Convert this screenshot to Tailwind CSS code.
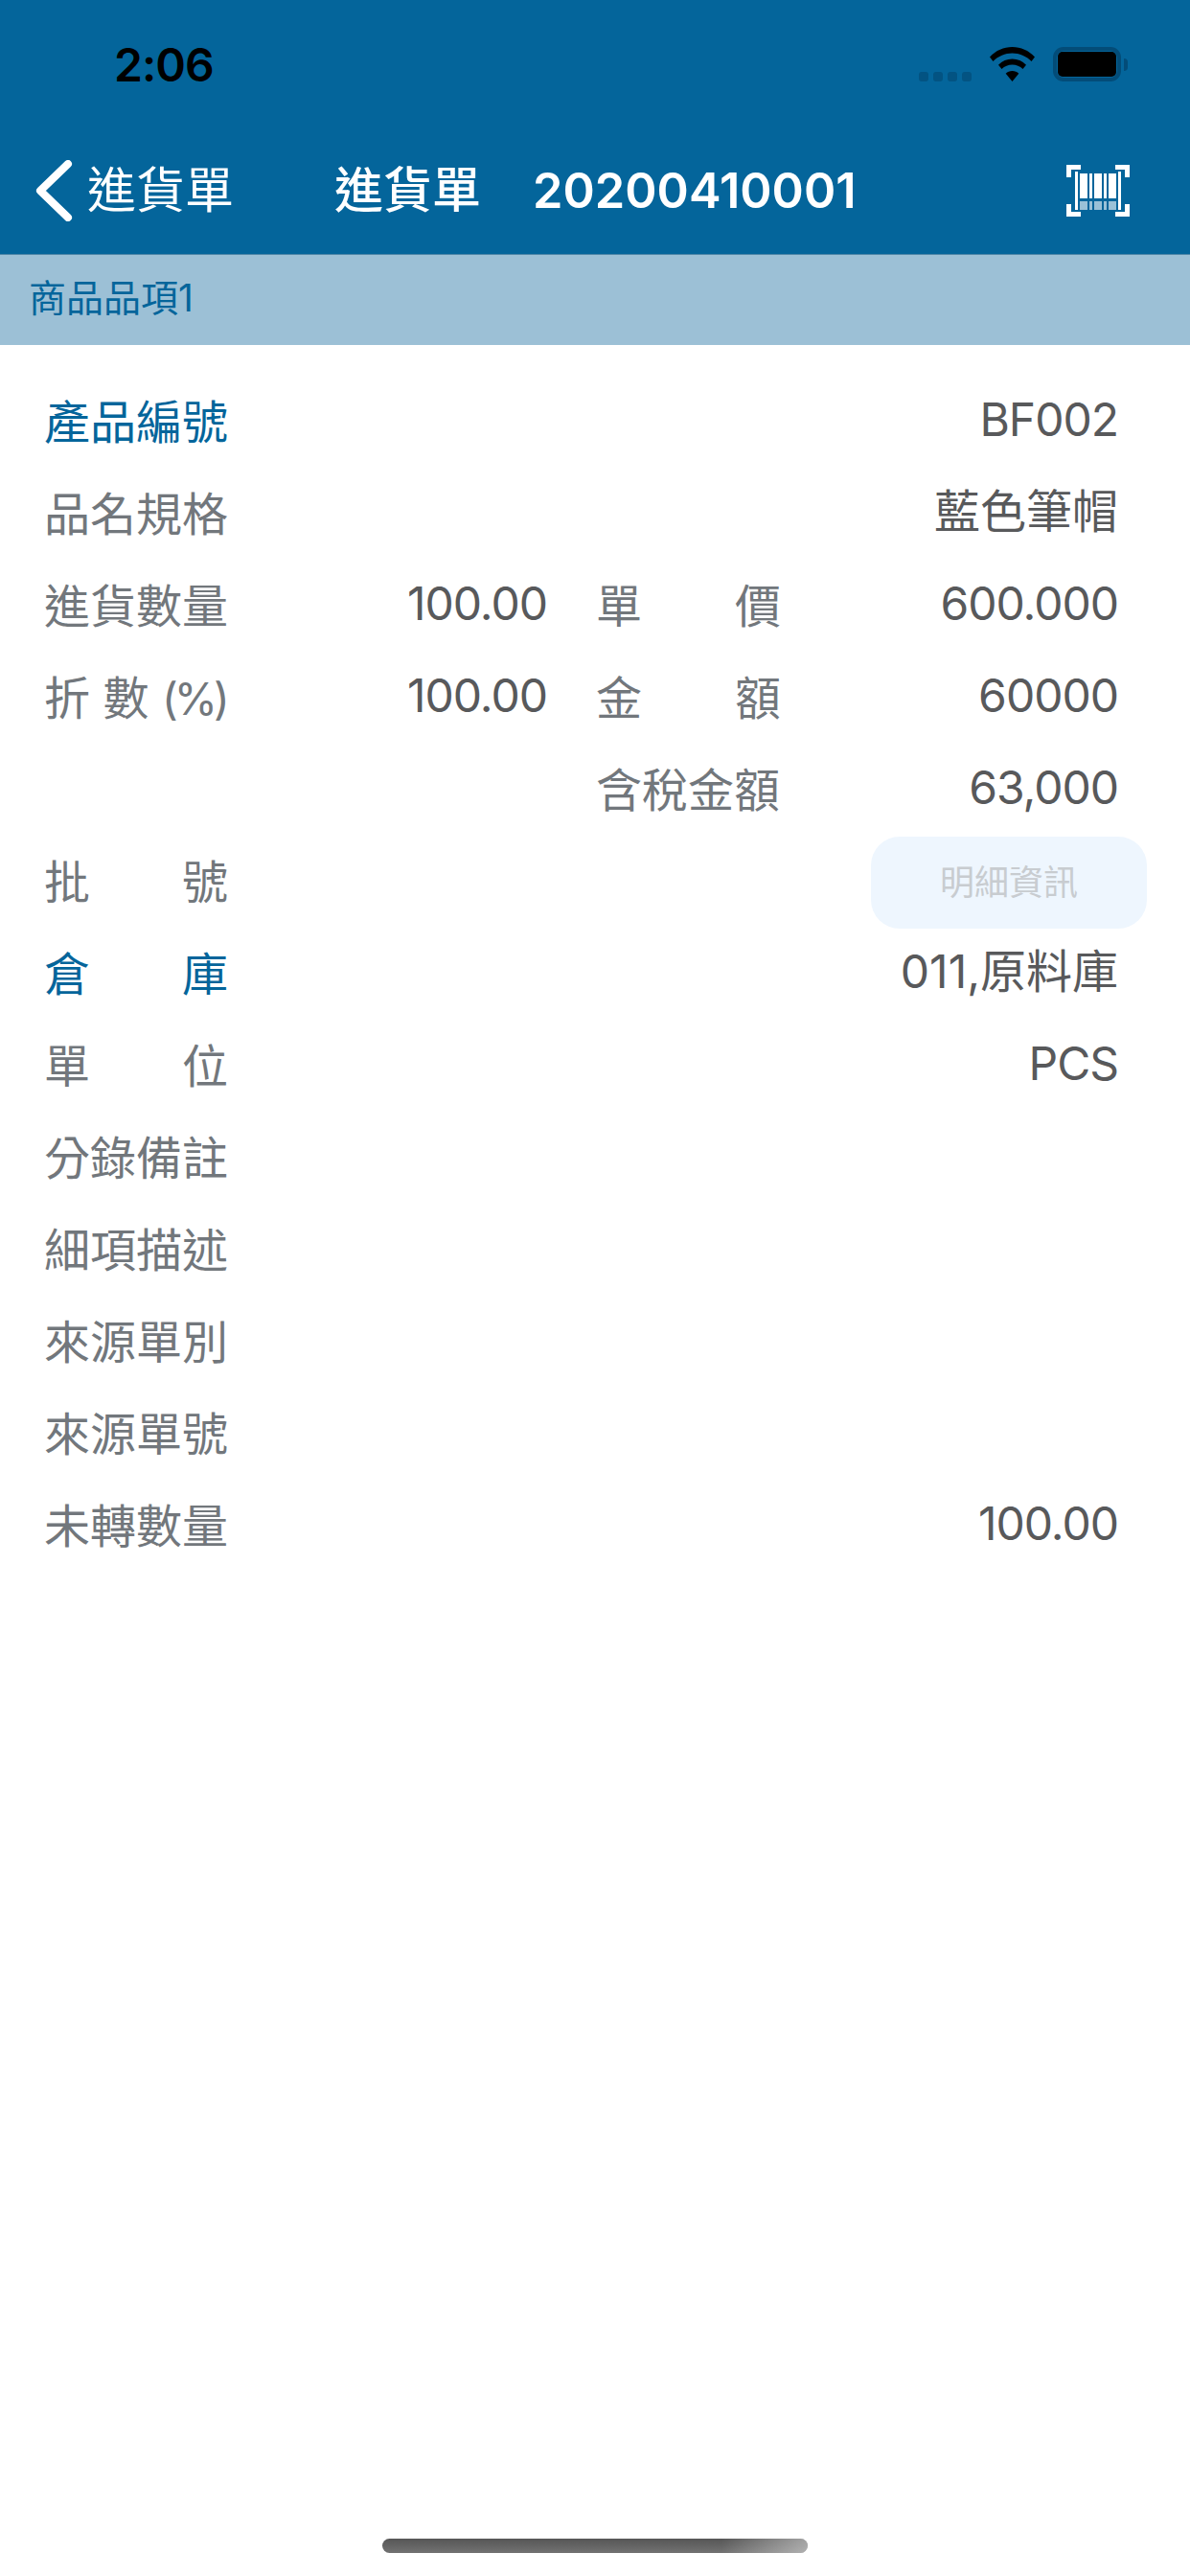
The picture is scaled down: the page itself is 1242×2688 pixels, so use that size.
<!DOCTYPE html>
<html lang="en">
<head>
  <meta charset="UTF-8" />
  <title>進貨單</title>
  <script src="https://cdn.jsdelivr.net/npm/@tailwindcss/browser@4"></script>
</head>
<body class="bg-white font-['Inter','Noto_Sans_CJK_TC',sans-serif]">
  <div class="relative w-[1242px] h-[2688px] overflow-hidden bg-white">

    <!-- Status bar + nav -->
    <div class="bg-[#04659b] h-[266px] flex flex-col border-b border-[#4f86a8]">
      <div class="h-[132px] flex items-start justify-between pl-[119px] pr-[65px] pt-[44px]">
        <span class="text-[48px] leading-[48px] font-semibold text-black tracking-[-1px]">2:06</span>
        <div class="flex items-start pt-[5px]">
          <div class="flex gap-[5px] mt-[26px] mr-[19px]">
            <span class="w-[10px] h-[10px] rounded-[3px] bg-[#035382]"></span>
            <span class="w-[10px] h-[10px] rounded-[3px] bg-[#035382]"></span>
            <span class="w-[10px] h-[10px] rounded-[3px] bg-[#035382]"></span>
            <span class="w-[10px] h-[10px] rounded-[3px] bg-[#035382]"></span>
          </div>
          <svg class="w-[47px] h-[36px] mr-[19px]" viewBox="0 0 47 36">
            <path d="M23.5 0C14.5 0 6.5 3.5 0 10.5l3.5 4.5C9 9.500 16 6.500 23.500 6.500S38 9.500 43.500 15l3.500-4.500C40.500 3.500 32.500 0 23.500 0z" fill="#000"/>
            <path d="M23.500 12.500c-5.500 0-10.500 2.200-14.500 6.200l3.500 4.300c3-3 6.800-4.500 11-4.500s8 1.500 11 4.500l3.500-4.300c-4-4-9-6.200-14.500-6.200z" fill="#000"/>
            <path d="M23.500 25c-2.700 0-5 1-6.800 2.800l6.800 8.200 6.800-8.200C28.500 26 26.200 25 23.500 25z" fill="#000"/>
          </svg>
          <div class="w-[71px] h-[36px] rounded-[11px] border-[4px] border-[#034c78] p-[1px]">
            <div class="w-full h-full rounded-[5px] bg-black"></div>
          </div>
          <span class="w-[4px] h-[13px] mt-[12px] ml-[3px] rounded-r-[4px] bg-[#034c78]"></span>
        </div>
      </div>
      <div class="h-[133px] flex items-center pl-[36px] text-white">
        <svg class="w-[40px] h-[64px]" viewBox="0 0 40 64" fill="none">
          <path d="M35 4L6 32l29 28" stroke="#fff" stroke-width="8" stroke-linecap="round" stroke-linejoin="round"/>
        </svg>
        <span class="ml-[15px] text-[51px] leading-[56px]">進貨單</span>
        <span class="ml-[105px] text-[51px] leading-[56px] font-medium">進貨單</span>
        <span class="ml-[54px] text-[50.5px] leading-[56px] font-semibold">20200410001</span>
        <svg class="ml-auto mr-[63px] w-[66px] h-[54px] blur-[0.6px]" viewBox="0 0 66 54" fill="#fff">
          <path d="M0 0h15v5H5v8H0zM66 0H51v5h10v8h5zM0 54h15v-5H5v-8H0zM66 54H51v-5h10v-8h5z"/>
          <path d="M9 7h3v40H9zM14 9h8v26h-8zM24 9h3v26h-3zM29 9h8v26h-8zM39 9h3v26h-3zM44 9h8v26h-8zM54 7h3v40h-3z"/>
          <path d="M14 38h8v9h-8zM24 38h3v9h-3zM29 38h8v9h-8zM39 38h3v9h-3zM44 38h8v9h-8z" fill-opacity=".6"/>
        </svg>
      </div>
    </div>

    <!-- Section band -->
    <div class="bg-[#9cc0d6] h-[94px] flex items-center pl-[30px] pb-[4px] text-[39px] text-[#04659b]">商品品項1</div>

    <!-- Detail rows -->
    <div class="pt-[33px] pl-[46px] pr-[75px] text-[48px] leading-[96px] text-[#72777c] whitespace-nowrap">
      <div class="h-[96px] flex justify-between">
        <span class="text-[#04659b]">產品編號</span>
        <span class="leading-[90px] text-[#58595b] tracking-[-1px]">BF002</span>
      </div>
      <div class="h-[96px] flex justify-between">
        <span>品名規格</span>
        <span class="leading-[90px] text-[#58595b]">藍色筆帽</span>
      </div>
      <div class="h-[96px] grid grid-cols-[192px_333px_244px_1fr]">
        <span>進貨數量</span>
        <span class="leading-[90px] text-right text-[#58595b] tracking-[-1px]">100.00</span>
        <span class="flex justify-between ml-[51px]"><span>單</span><span>價</span></span>
        <span class="leading-[90px] text-right text-[#58595b] tracking-[-1px]">600.000</span>
      </div>
      <div class="h-[96px] grid grid-cols-[192px_333px_244px_1fr]">
        <span>折 數 <span class="text-[46px] tracking-[-4px]">(%)</span></span>
        <span class="leading-[90px] text-right text-[#58595b] tracking-[-1px]">100.00</span>
        <span class="flex justify-between ml-[51px]"><span>金</span><span>額</span></span>
        <span class="leading-[90px] text-right text-[#58595b] tracking-[-1px]">60000</span>
      </div>
      <div class="h-[96px] grid grid-cols-[192px_333px_244px_1fr]">
        <span></span>
        <span></span>
        <span class="ml-[51px]">含稅金額</span>
        <span class="leading-[90px] text-right text-[#58595b] tracking-[-1px]">63,000</span>
      </div>
      <div class="h-[96px] flex justify-between items-center">
        <span class="flex justify-between w-[192px]"><span>批</span><span>號</span></span>
        <button class="w-[288px] h-[96px] -mr-[30px] rounded-[30px] bg-[#eef6fe] text-[36px] leading-[96px] text-[#c8ccd0]">明細資訊</button>
      </div>
      <div class="h-[96px] flex justify-between">
        <span class="flex justify-between w-[192px] text-[#04659b]"><span>倉</span><span>庫</span></span>
        <span class="leading-[90px] text-[#58595b]">011,原料庫</span>
      </div>
      <div class="h-[96px] flex justify-between">
        <span class="flex justify-between w-[192px]"><span>單</span><span>位</span></span>
        <span class="leading-[90px] text-[#58595b] tracking-[-1px]">PCS</span>
      </div>
      <div class="h-[96px]">分錄備註</div>
      <div class="h-[96px]">細項描述</div>
      <div class="h-[96px]">來源單別</div>
      <div class="h-[96px]">來源單號</div>
      <div class="h-[96px] flex justify-between">
        <span>未轉數量</span>
        <span class="leading-[90px] text-[#58595b] tracking-[-1px]">100.00</span>
      </div>
    </div>

    <!-- Home indicator -->
    <div class="absolute left-[399px] top-[2649px] w-[444px] h-[15px] rounded-full overflow-hidden bg-gradient-to-b from-[#565656] to-[#727272]">
      <div class="ml-auto w-[90px] h-full bg-gradient-to-r from-transparent to-white/45"></div>
    </div>
  </div>
</body>
</html>
